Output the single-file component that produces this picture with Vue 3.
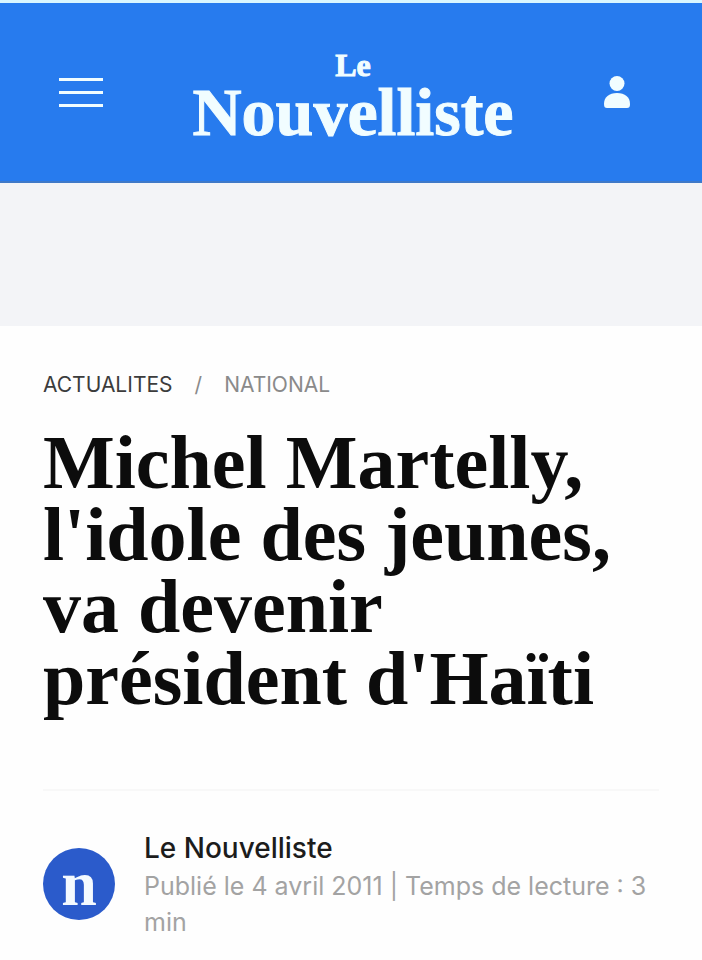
<template>
  <div class="page">
    <header class="header">
      <button class="header__button" type="button" aria-label="Menu">
        <svg width="44" height="32" viewBox="0 0 44 32" fill="none" stroke="currentColor" stroke-width="3">
          <path d="M0 3.500h44M0 16.500h44M0 29.500h44" />
        </svg>
      </button>
      <a class="logo" href="#">
        <span class="logo__le">Le</span>
        <span class="logo__name">Nouvelliste</span>
      </a>
      <button class="header__button" type="button" aria-label="Compte">
        <svg width="28" height="34" viewBox="0 0 28 34" fill="currentColor">
          <circle cx="14" cy="8.500" r="7.500" />
          <path d="M1 29C1 22 6 18 14 18S27 22 27 29C27 32 26 33 24 33H4C2 33 1 32 1 29Z" />
        </svg>
      </button>
    </header>
    <div class="banner"></div>
    <main class="article">
      <nav class="crumbs">
        <a
          v-for="{ text, current } in crumbs"
          :key="text"
          :class="['crumbs__link', { 'crumbs__link--current': current }]"
          href="#"
        >{{ text }}</a>
      </nav>
      <h1 class="article__title">{{ title }}</h1>
      <div class="author">
        <span class="author__avatar">n</span>
        <div class="author__text">
          <a class="author__name" href="#">Le Nouvelliste</a>
          <p class="author__meta">Publié le {{ date }} | Temps de lecture : {{ minutes }} min</p>
        </div>
      </div>
    </main>
  </div>
</template>

<script setup>
const crumbs = [
  { text: "ACTUALITES", current: false },
  { text: "NATIONAL", current: true }
];
const title = "Michel Martelly, l'idole des jeunes, va devenir président d'Haïti";
const date = "4 avril 2011";
const minutes = 3;
</script>

<style>
body {
    background-color: #fefefe;
}
</style>

<style scoped>
.page {
    font-family: Inter, "Liberation Sans", sans-serif;
    color: #1c1c1c;
}
a {
    color: inherit;
    text-decoration: none;
}
.header {
    display: flex;
    align-items: center;
    justify-content: space-between;
    padding: 42px 71px 42px 59px;
    border-top: 3px solid #d9f6ff;
    border-bottom: 2px solid #3f79c8;
    background-color: #277bee;
    color: #f1fdff;
}
.header__button {
    display: flex;
    padding: 0;
    border: none;
    background: none;
    color: inherit;
    cursor: pointer;
}
.logo {
    display: flex;
    flex-direction: column;
    align-items: center;
    font-family: "Liberation Serif", serif;
    font-weight: bold;
    -webkit-text-stroke: 1px currentColor;
}
.logo__le {
    font-size: 32px;
    line-height: 40px;
}
.logo__name {
    font-size: 68px;
    line-height: 54px;
}
.banner {
    height: 143px;
    background-color: #f3f4f7;
}
.article {
    padding: 45px 43px 16px;
}
.crumbs {
    display: flex;
    font-size: 21px;
    line-height: 28px;
}
.crumbs__link {
    color: #3c3c3c;
}
.crumbs__link--current {
    color: #8a8a8a;
}
.crumbs__link + .crumbs__link::before {
    content: "/";
    padding: 0 22px;
}
.article__title {
    margin: 27px 0 75px;
    font-family: "Liberation Serif", serif;
    font-size: 76px;
    line-height: 72px;
    color: #0c0c0c;
}
.author {
    display: flex;
    align-items: center;
    gap: 29px;
    padding-top: 37px;
    border-top: 2px solid #f8f8f8;
}
.author__avatar {
    display: flex;
    flex: none;
    align-items: center;
    justify-content: center;
    width: 72px;
    height: 72px;
    border-radius: 50%;
    background-color: #2b5bcb;
    color: #f4faff;
    font-family: "Liberation Serif", serif;
    font-size: 64px;
    font-weight: bold;
    line-height: 56px;
}
.author__name {
    display: block;
    font-size: 28px;
    font-weight: 500;
    line-height: 40px;
}
.author__meta {
    margin: 0;
    font-size: 25px;
    line-height: 36px;
    color: #a3a3a3;
}
</style>
